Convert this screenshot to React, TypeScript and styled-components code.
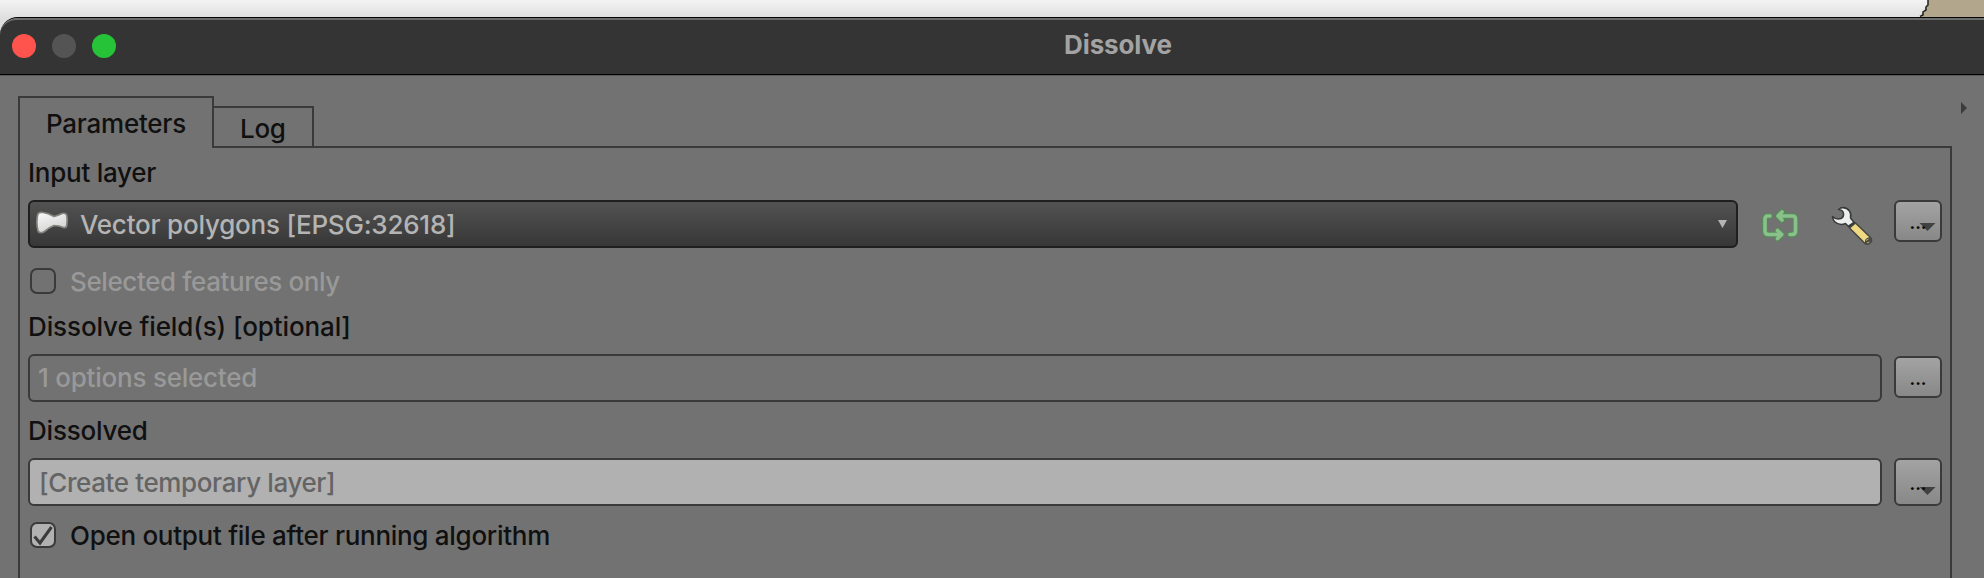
import React from "react";
import styled, { createGlobalStyle } from "styled-components";

const LINE = "#393b3a";
const BODY = "#727272";

const GlobalStyle = createGlobalStyle`
  * { box-sizing: border-box; }
  html, body { margin: 0; padding: 0; overflow: hidden; }
  body { font-family: Inter, "Liberation Sans", sans-serif; font-size: 26px; font-weight: 450; line-height: 32px; color: #101010; }
`;

const Screen = styled.div`
  display: flex;
  flex-direction: column;
  width: 1984px;
  height: 578px;
  overflow: hidden;
  background: #dedede;
`;

const Desktop = styled.div`
  height: 17px;
  flex: none;
  background: linear-gradient(#f3f3f3, #e0e0e0);
  display: flex;
  justify-content: flex-end;
`;

const Dialog = styled.div`
  flex: 1;
  display: flex;
  flex-direction: column;
  background: ${BODY};
  border-top: 1px solid #060606;
  border-top-left-radius: 18px;
  overflow: hidden;
`;

const TitleBar = styled.header`
  height: 57px;
  flex: none;
  display: grid;
  grid-template-columns: 1fr auto 1fr;
  align-items: center;
  padding: 0 12px;
  background: #343434;
  border-top: 2px solid #6c6e6d;
  border-bottom: 1px solid #000;
  border-top-left-radius: 17px;
  box-shadow: 0 1px 0 #5a5a5a;
`;

const Lights = styled.div`
  display: flex;
  gap: 16px;
  margin-top: -2px;
`;

const Light = styled.span<{ $color: string }>`
  width: 24px;
  height: 24px;
  border-radius: 50%;
  background: ${(p) => p.$color};
`;

const Title = styled.h1`
  margin: -5px 0 0;
  padding-left: 252px;
  font-size: 26px;
  line-height: 32px;
  font-weight: 700;
  letter-spacing: -0.12px;
  color: #a3a3a3;
`;

const Body = styled.main`
  flex: 1;
  display: grid;
  grid-template-columns: 1934px 1fr;
  padding: 21px 0 0 18px;
`;

const Notebook = styled.section`
  display: flex;
  flex-direction: column;
`;

const Tabs = styled.div`
  display: flex;
  align-items: flex-end;
  height: 52px;
`;

const Tab = styled.div<{ $active?: boolean }>`
  width: ${(p) => (p.$active ? 196 : 100)}px;
  height: ${(p) => (p.$active ? 52 : 42)}px;
  padding-top: ${(p) => (p.$active ? 10 : 5)}px;
  padding-left: 26px;
  border: 2px solid ${LINE};
  border-bottom-width: ${(p) => (p.$active ? 0 : 2)}px;
  border-left-width: ${(p) => (p.$active ? 2 : 0)}px;
  white-space: nowrap;
`;

const TabRule = styled.div`
  flex: 1;
  height: 2px;
  background: ${LINE};
`;

const Panel = styled.div`
  flex: 1;
  padding: 9px 8px 0;
  border: solid ${LINE};
  border-width: 0 2px;
`;

const Label = styled.div`
  height: 32px;
  margin-bottom: 11px;
  white-space: nowrap;
`;

const Text = styled.span<{ $track?: number }>`
  letter-spacing: ${(p) => p.$track ?? 0}px;
  white-space: nowrap;
`;

const Row = styled.div<{ $after: number }>`
  display: flex;
  align-items: center;
  height: 48px;
  margin-bottom: ${(p) => p.$after}px;
`;

const Combo = styled.div`
  display: flex;
  align-items: center;
  width: 1710px;
  height: 48px;
  padding: 0 9px 0 6px;
  border: 2px solid #1f1f1f;
  border-radius: 6px;
  background: linear-gradient(#525252, #373737);
  color: #b4b4b4;
`;

const ComboText = styled(Text)`
  flex: 1;
  padding: 2px 0 0 12px;
`;

const Field = styled.div<{ $enabled?: boolean }>`
  display: flex;
  align-items: center;
  width: 1854px;
  height: 48px;
  margin-right: 12px;
  padding-left: ${(p) => (p.$enabled ? 9 : 8)}px;
  padding-top: ${(p) => (p.$enabled ? 2 : 0)}px;
  border: 2px solid ${LINE};
  border-radius: 6px;
  background: ${(p) => (p.$enabled ? "#b1b1b1" : "transparent")};
  color: ${(p) => (p.$enabled ? "#646464" : "#999999")};
`;

const IconSlot = styled.div<{ $left: number; $w: number }>`
  width: ${(p) => p.$w}px;
  height: 48px;
  margin-left: ${(p) => p.$left}px;
`;

const MoreButton = styled.button<{ $height?: number; $lift?: number; $text: number }>`
  display: flex;
  position: relative;
  isolation: isolate;
  justify-content: center;
  width: 48px;
  height: ${(p) => p.$height ?? 42}px;
  margin: 0 0 ${(p) => p.$lift ?? 0}px;
  padding: ${(p) => p.$text}px 0 0;
  border: 2px solid ${LINE};
  border-radius: 6px;
  background: linear-gradient(#a3a3a3, #888888);
  color: #080808;
  font: 700 17px/20px Inter, "Liberation Sans", sans-serif;
`;

const MenuArrow = styled.svg<{ $top: number }>`
  position: absolute;
  z-index: -1;
  left: 23px;
  top: ${(p) => p.$top}px;
`;

const CheckRow = styled.div<{ $disabled?: boolean }>`
  display: flex;
  align-items: center;
  height: 32px;
  gap: 14px;
  padding-left: 2px;
  margin-bottom: 14px;
  color: ${(p) => (p.$disabled ? "#999999" : "#101010")};

  ${Text} {
    padding-top: 2px;
  }
`;

const CheckBox = styled.span<{ $checked?: boolean }>`
  display: block;
  width: 26px;
  height: 26px;
  border: 2px solid ${LINE};
  border-radius: 7px;
  background: ${(p) => (p.$checked ? "#b1b1b1" : "transparent")};
`;

const Expander = styled.div`
  padding: 6px 0 0 9px;
  line-height: 0;
`;

const PolygonIcon = () => (
  <svg width="32" height="24" viewBox="36 210 32 24" style={{ marginTop: -4 }}>
    <defs>
      <linearGradient id="poly" x1="0" y1="0" x2="0.5" y2="1">
        <stop offset="0" stopColor="#fafafa" />
        <stop offset="1" stopColor="#d2d2d2" />
      </linearGradient>
    </defs>
    <path
      d="M38 214Q39 212 43 212.500Q48 213 54 216.500Q58 215.500 62 213.500Q66 212.500 66.800 215.500Q67.300 219 67 223Q67 228.500 63.500 227.500Q59 225.500 54 225.500Q49 227.500 44.500 231.500Q41 234 38.200 231.500Q36.500 226 37 220Q37 216 38 214Z"
      fill="url(#poly)"
      stroke="#84857e"
      strokeWidth="1.7"
    />
  </svg>
);

const IterateIcon = () => (
  <svg width="40" height="48" viewBox="1760 200 40 48" fill="none" strokeLinecap="round" strokeLinejoin="round">
    {[
      ["#4d9350", 5.5],
      ["#8bc08c", 3.6],
    ].map(([color, w]) => (
      <path
        key={color}
        stroke={color}
        strokeWidth={w}
        d="M1770 216H1768Q1765 216 1765 219V231Q1765 234.500 1768.500 234.500H1781M1777.500 230.500L1781.800 234.500L1777.500 238.500M1790 234.500H1792Q1795.500 234.500 1795.500 231V219Q1795.500 216 1792.500 216H1779M1782 212L1778 216L1782 220"
      />
    ))}
  </svg>
);

const WrenchIcon = () => (
  <svg width="44" height="48" viewBox="1830 200 44 48" strokeLinejoin="round">
    <path
      d="M1840.500 208Q1846 206.500 1849.500 211Q1851.500 214 1850.500 218L1854.500 223L1849 227L1845.500 223.500Q1839 226 1834.500 221.500Q1832.500 219 1832.500 216.500Q1836 220 1841 218.500Q1844 217 1843.500 213.500Q1843 210 1838.500 209.500Z"
      fill="#eeeeee"
      stroke="#373a3a"
      strokeWidth="1.5"
    />
    <path d="M1848 225.500L1854 221.500L1856 223.500L1850 228Z" fill="#36393a" />
    <path
      d="M1849.500 228L1855.500 223L1871 238Q1872.500 241 1870 243Q1868 245 1865 243.500Z"
      fill="#efd982"
      stroke="#44473f"
      strokeWidth="1.5"
    />
    <path d="M1865 243Q1864 238 1870 237Q1873 239 1870.500 242.500Q1868 245.500 1865 243Z" fill="#4a4a46" />
    <path d="M1866 240.500L1868.500 239M1867 243L1869.500 242" stroke="#b7ac7b" strokeWidth="1" />
  </svg>
);

const DownArrow = ({ top }: { top: number }) => (
  <MenuArrow $top={top} width="17" height="8" viewBox="0 0 17 8">
    <path d="M0.500 0H16.500L8.500 8Z" fill="#404241" />
  </MenuArrow>
);

export default function App() {
  return (
    <>
      <GlobalStyle />
      <Screen>
        <Desktop>
          <svg width="66" height="17" viewBox="1918 0 66 17">
            <path d="M1928 0H1984V17H1922V13L1924 11L1926 6L1928 5Z" fill="#b2a78d" />
            <path d="M1928 0V5L1926 7V10L1923 12V15L1920 16.500" fill="none" stroke="#222" strokeWidth="1.500" />
          </svg>
        </Desktop>
        <Dialog>
          <TitleBar>
            <Lights>
              <Light $color="#ff544d" />
              <Light $color="#545454" />
              <Light $color="#26c237" />
            </Lights>
            <Title>Dissolve</Title>
          </TitleBar>
          <Body>
            <Notebook>
              <Tabs>
                <Tab $active>
                  <Text $track={-0.24}>Parameters</Text>
                </Tab>
                <Tab>
                  <Text $track={-0.3}>Log</Text>
                </Tab>
                <TabRule />
              </Tabs>
              <Panel>
                <Label>
                  <Text $track={-0.26}>Input layer</Text>
                </Label>
                <Row $after={17}>
                  <Combo>
                    <PolygonIcon />
                    <ComboText $track={-0.22}>Vector polygons [EPSG:32618]</ComboText>
                    <svg width="9" height="8" viewBox="0 0 9 8">
                      <path d="M0 0H9L4.500 8Z" fill="#b4b4b4" />
                    </svg>
                  </Combo>
                  <IconSlot $left={22} $w={40}>
                    <IterateIcon />
                  </IconSlot>
                  <IconSlot $left={30} $w={64}>
                    <WrenchIcon />
                  </IconSlot>
                  <MoreButton $text={11} $lift={6}>
                    ...
                    <DownArrow top={21} />
                  </MoreButton>
                </Row>
                <CheckRow $disabled>
                  <CheckBox />
                  <Text $track={-0.39}>Selected features only</Text>
                </CheckRow>
                <Label>
                  <Text $track={-0.11}>Dissolve field(s) [optional]</Text>
                </Label>
                <Row $after={13}>
                  <Field>
                    <Text $track={-0.23}>1 options selected</Text>
                  </Field>
                  <MoreButton $text={11} $lift={2}>
                    ...
                  </MoreButton>
                </Row>
                <Label>
                  <Text $track={-0.2}>Dissolved</Text>
                </Label>
                <Row $after={13}>
                  <Field $enabled>
                    <Text $track={-0.38}>[Create temporary layer]</Text>
                  </Field>
                  <MoreButton $height={48} $text={14}>
                    ...
                    <DownArrow top={27} />
                  </MoreButton>
                </Row>
                <CheckRow>
                  <CheckBox $checked>
                    <svg width="22" height="22" viewBox="0 0 22 22" style={{ display: "block" }}>
                      <path d="M2.500 12.500L8 19L19.500 3" fill="none" stroke="#3b3b3b" strokeWidth="3" />
                    </svg>
                  </CheckBox>
                  <Text $track={-0.28}>Open output file after running algorithm</Text>
                </CheckRow>
              </Panel>
            </Notebook>
            <Expander>
              <svg width="6" height="12" viewBox="0 0 6 12">
                <path d="M0 0L6 6L0 12Z" fill="#3a3c3b" />
              </svg>
            </Expander>
          </Body>
        </Dialog>
      </Screen>
    </>
  );
}
